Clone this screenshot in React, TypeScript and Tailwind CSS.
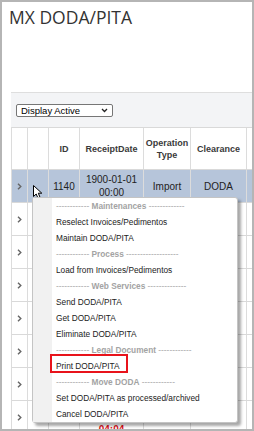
import React from "react";

const SANS = "font-['Liberation_Sans',Arial,sans-serif]";

type MenuItem = { label: string; heading?: boolean; left?: string; right?: string };

const menu: MenuItem[] = [
  { label: "Maintenances", heading: true, left: "------------", right: "-------------" },
  { label: "Reselect Invoices/Pedimentos" },
  { label: "Maintain DODA/PITA" },
  { label: "Process", heading: true, left: "------------", right: "-------------------" },
  { label: "Load from Invoices/Pedimentos" },
  { label: "Web Services", heading: true, left: "------------", right: "--------------" },
  { label: "Send DODA/PITA" },
  { label: "Get DODA/PITA" },
  { label: "Eliminate DODA/PITA" },
  { label: "Legal Document", heading: true, left: "------------", right: "------------" },
  { label: "Print DODA/PITA" },
  { label: "Move DODA", heading: true, left: "------------", right: "------------" },
  { label: "Set DODA/PITA as processed/archived" },
  { label: "Cancel DODA/PITA" },
];

// widths include the right border of each cell
const cols = ["w-[16px]", "w-[21px]", "w-[31px]", "w-[64px]", "w-[47px]", "w-[56px]", "w-[60px]"];

function Chevron() {
  return (
    <svg width="5" height="7" viewBox="0 0 5 7" className="block">
      <path d="M1 0.8 L3.8 3.5 L1 6.2" fill="none" stroke="#666" strokeWidth="1.4" />
    </svg>
  );
}

function Cell({ i, children, className = "" }: { i: number; children?: React.ReactNode; className?: string }) {
  return (
    <div
      className={`${cols[i]} shrink-0 h-full flex items-center justify-center text-center border-r border-[#dcdcdc] ${className}`}
    >
      {children}
    </div>
  );
}

function Row({
  selected,
  id,
  date,
  op,
  clearance,
  red,
}: {
  selected?: boolean;
  id?: string;
  date?: [string, string];
  op?: string;
  clearance?: string;
  red?: boolean;
}) {
  return (
    <div
      className={`flex h-[33px] border-b border-[#d9d9d9] ${selected ? "bg-[#b6c5da]" : "bg-white"}`}
    >
      <Cell i={0}>
        <Chevron />
      </Cell>
      <Cell i={1} />
      <Cell i={2}>{id}</Cell>
      <Cell i={3} className={red ? "pt-[12px] text-[#e0141c] font-bold" : ""}>
        {date && (
          <div className="leading-[13px]">
            <div>{date[0]}</div>
            <div>{date[1]}</div>
          </div>
        )}
      </Cell>
      <Cell i={4}>{op}</Cell>
      <Cell i={5}>{clearance}</Cell>
      <Cell i={6} />
    </div>
  );
}

export default function App() {
  return (
    <div className={`relative w-[254px] h-[431px] overflow-hidden border-2 border-[#b5b5b5] bg-white ${SANS}`}>
      <h1 className="pt-[5px] pl-[7px] text-[17.5px] leading-[20px] text-[#333] font-['Open_Sans',sans-serif] whitespace-nowrap">
        MX DODA/PITA
      </h1>

      <div className="mt-[65px] ml-[9px] w-[320px] border-t border-[#dedede] bg-[#f3f4f6]">
        <div className="mt-[11px] ml-[5px] flex h-[13px] w-[97px] items-center justify-between rounded-[2px] border border-[#767676] bg-white pl-[4px] pr-[4px] text-[9.5px] leading-none text-black">
          <span>Display Active</span>
          <svg width="7" height="5" viewBox="0 0 7 5">
            <path d="M1 1 L3.5 3.5 L6 1" fill="none" stroke="#222" strokeWidth="1.3" />
          </svg>
        </div>

        <div className="mt-[10px] border-l border-[#dcdcdc] text-[10px] text-[#222]">
          <div className="flex h-[43px] border-t border-b border-[#d9d9d9] bg-white font-bold text-[9px] leading-[12px] text-[#3a3a3a]">
            <Cell i={0} />
            <Cell i={1} />
            <Cell i={2}>ID</Cell>
            <Cell i={3}>ReceiptDate</Cell>
            <Cell i={4}>
              Operation
              <br />
              Type
            </Cell>
            <Cell i={5}>Clearance</Cell>
            <Cell i={6} />
          </div>
          <Row selected id="1140" date={["1900-01-01", "00:00"]} op="Import" clearance="DODA" />
          <Row />
          <Row />
          <Row />
          <Row />
          <Row />
          <Row />
          <Row red date={["1900-01-01", "04:04"]} />
        </div>
      </div>

      {/* mouse pointer */}
      <svg width="11" height="15" viewBox="0 0 11 15" className="absolute left-[31px] top-[183px]">
        <path
          d="M0.5 0.5 L0.5 11.5 L3.2 9 L5.2 13.6 L7.2 12.7 L5.3 8.2 L8.8 8.2 Z"
          fill="#fff"
          stroke="#000"
          strokeWidth="1"
          strokeLinejoin="round"
        />
      </svg>

      {/* context menu */}
      <div className="absolute left-[30px] top-[195px] w-[206px] rounded-[3px] border border-[#c4c4c4] bg-white shadow-[3px_3px_3px_rgba(0,0,0,0.35)]">
        <div className="flex">
          <div className="w-[19px] shrink-0 bg-[#f1f1f1]" />
          <div className="flex-1 pl-[4px] text-[8.3px]">
            {menu.map((m) =>
              m.heading ? (
                <div key={m.label} className="h-4 leading-4 whitespace-nowrap text-[#a3a3a3]">
                  <span className="text-[#a8a8a8]">{m.left}</span> <span className="font-bold">{m.label}</span>{" "}
                  <span className="text-[#a8a8a8]">{m.right}</span>
                </div>
              ) : (
                <div key={m.label} className="h-4 leading-4 whitespace-nowrap text-[#222]">
                  {m.label}
                </div>
              )
            )}
          </div>
        </div>
        <div className="absolute left-[17px] top-[156px] h-[19px] w-[78px] border-2 border-[#e8131b]" />
      </div>
    </div>
  );
}
